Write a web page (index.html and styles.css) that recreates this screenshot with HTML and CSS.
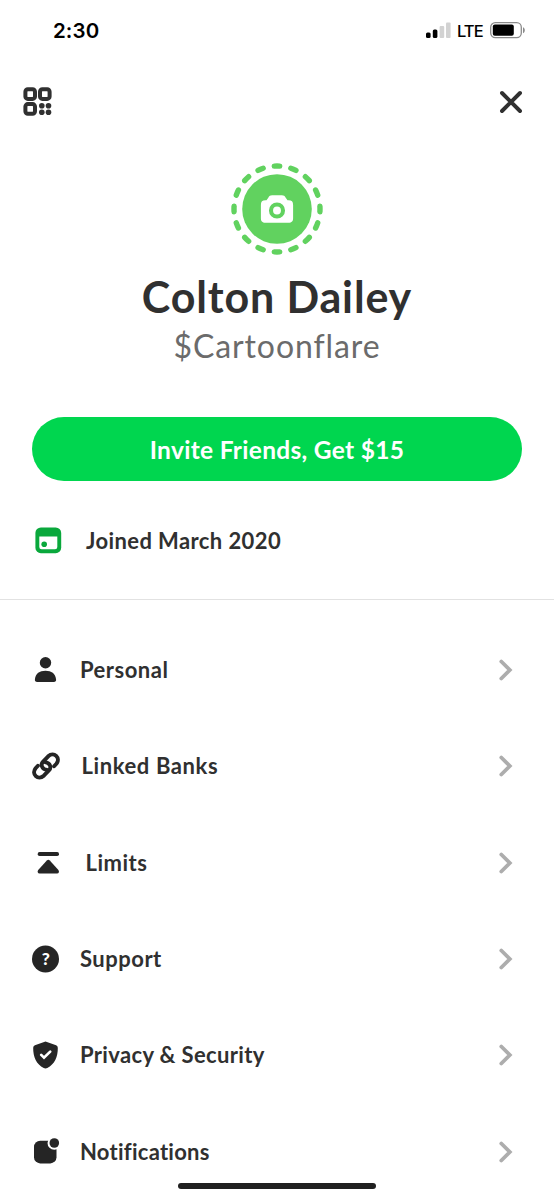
FILE: index.html
```html
<!DOCTYPE html>
<html lang="en">
<head>
<meta charset="utf-8">
<title>Profile</title>
<link rel="stylesheet" href="styles.css">
</head>
<body>
<div class="screen">
  <header class="status">
    <span class="time">2:30</span>
    <div class="status-right">
      <svg class="signal" width="26" height="17" viewBox="0 0 26 17"><rect x="0" y="10.5" width="4.6" height="5.5" rx="1.5"/><rect x="6.8" y="7.5" width="4.6" height="8.5" rx="1.5"/><g fill="#d2d2d2"><rect x="13.6" y="4" width="4.6" height="12" rx="1"/><rect x="20" y="0.5" width="4.6" height="15.5" rx="1"/></g></svg>
      <span class="lte">LTE</span>
      <svg class="battery" width="36" height="17" viewBox="0 0 36 17"><rect x=".7" y=".7" width="30.6" height="15" rx="4.6" fill="none" stroke="#8a8a8a" stroke-width="1.3"/><rect x="2.8" y="2.6" width="21" height="11.2" rx="2"/><path d="M33 5.2c2.4.7 2.4 5.3 0 6z" fill="#8a8a8a"/></svg>
    </div>
  </header>
  <nav class="topbar">
    <svg width="30" height="30" viewBox="0 0 30 30" fill="none" stroke="#303030" stroke-width="4"><rect x="2.4" y="2.3" width="9.600" height="9.600" rx="2.4"/><rect x="17" y="2.3" width="9.600" height="9.600" rx="2.4"/><rect x="2.4" y="17.1" width="9.600" height="9.600" rx="2.4"/><g fill="#303030" stroke="none"><circle cx="18.8" cy="18.7" r="2.8"/><circle cx="25.5" cy="18.7" r="2.8"/><circle cx="18.8" cy="25.3" r="2.8"/><circle cx="25.5" cy="25.3" r="2.8"/></g></svg>
    <svg width="24" height="24" viewBox="0 0 24 24" fill="none" stroke="#303030" stroke-width="3.9" stroke-linecap="round"><path d="M3 3l18 18M21 3L3 21"/></svg>
  </nav>
  <section class="profile">
    <svg class="avatar" width="92" height="92" viewBox="0 0 92 92">
      <circle cx="46" cy="46" r="34.8" fill="#61d25f"/>
      <circle cx="46" cy="46" r="43" fill="none" stroke="#61d25f" stroke-width="5.4" stroke-linecap="round" pathLength="160" stroke-dasharray="3.3 6.7" stroke-dashoffset="1.65"/>
      <path fill="#fff" d="M34.5 37.300h1l1.800-2.500c.9-1.800 2-2.500 3.800-2.500h9.800c1.800 0 2.900.7 3.800 2.500l1.800 2.500h1c3.300 0 4.600 1.400 4.600 4.600v13.200c0 3.300-1.300 4.700-4.600 4.700h-23c-3.300 0-4.600-1.400-4.600-4.700V41.900c0-3.200 1.300-4.600 4.600-4.600z"/>
      <circle cx="46" cy="47.500" r="6" fill="none" stroke="#61d25f" stroke-width="4.1"/>
    </svg>
    <h1 class="name">Colton Dailey</h1>
    <p class="handle">$Cartoonflare</p>
    <button class="invite">Invite Friends, Get $15</button>
  </section>
  <section class="joined">
    <svg width="27" height="27" viewBox="0 0 27 27"><rect x=".4" y=".4" width="25.8" height="25.8" rx="5.5" fill="#0aa83c"/><path fill="#fff" d="M4.3 9.4h18v10.5q0 2.3-2.3 2.3H6.600q-2.300 0-2.300-2.300z"/><circle cx="9.200" cy="17.200" r="2.800" fill="#0aa83c"/></svg>
    <span>Joined March 2020</span>
  </section>
  <ul class="menu">
    <li><svg class="icon" viewBox="0 0 30 30"><circle cx="13.500" cy="7.800" r="5.700"/><path d="M5.200 27C3.500 27 2.700 26 2.900 24.500 3.600 18.500 7.500 15.800 13.500 15.800s9.900 2.700 10.600 8.700c.2 1.500-.6 2.500-2.300 2.500z"/></svg><span class="label personal">Personal</span><svg class="chev" viewBox="0 0 14 22"><path d="M2.300 2.500L10.800 11l-8.500 8.500"/></svg></li>
    <li><svg class="icon" viewBox="0 0 30 30"><g fill="none" stroke="#252525" stroke-width="3.900" stroke-linecap="round" stroke-linejoin="round"><path d="M15 18.900c-4.900-.6-6.900-5.200-3.900-8.300l5.100-5.300c5.800-5.400 12.800 1.800 8.200 7.500l-2.300 2.500"/><path d="M13 11.100c4.900.6 6.900 5.200 3.900 8.300l-5.100 5.300c-5.800 5.400-12.800-1.800-8.200-7.500l2.300-2.500"/></g></svg><span class="label linked">Linked Banks</span><svg class="chev" viewBox="0 0 14 22"><path d="M2.300 2.500L10.800 11l-8.500 8.500"/></svg></li>
    <li><svg class="icon" viewBox="0 0 30 30"><rect x="5.700" y="4.100" width="21.300" height="4" rx="1.800"/><path d="M14.800 12.400q1.500-1.400 3 0l8.600 9.500c1.200 1.400.5 3.500-1.300 3.500H7.500c-1.800 0-2.500-2.100-1.300-3.500z"/></svg><span class="label limits">Limits</span><svg class="chev" viewBox="0 0 14 22"><path d="M2.300 2.500L10.800 11l-8.500 8.500"/></svg></li>
    <li><svg class="icon" viewBox="0 0 30 30"><circle cx="13.500" cy="15" r="13.500"/><text class="question" x="13.700" y="21.300" text-anchor="middle">?</text></svg><span class="label support">Support</span><svg class="chev" viewBox="0 0 14 22"><path d="M2.300 2.500L10.800 11l-8.500 8.500"/></svg></li>
    <li><svg class="icon" viewBox="0 0 30 30"><path d="M12.100 1.900q1.400-.6 2.800 0l9.200 3.400q1.700.7 1.700 2.500C26 17 22.500 24.500 15.300 28q-1.800.9-3.600 0C4.500 24.500 1 17 1.200 7.800q0-1.800 1.700-2.500z"/><path d="M9.200 14.900l2.800 2.700 6.200-6" fill="none" stroke="#fff" stroke-width="2.700" stroke-linecap="round"/></svg><span class="label privacy">Privacy &amp; Security</span><svg class="chev" viewBox="0 0 14 22"><path d="M2.300 2.500L10.800 11l-8.500 8.500"/></svg></li>
    <li><svg class="icon" viewBox="0 0 30 30"><rect x="2" y="3.700" width="22.500" height="22.700" rx="6.200"/><circle cx="22.300" cy="6" r="6.800" fill="#fff"/><circle cx="22.300" cy="6" r="4.800"/></svg><span class="label notifications">Notifications</span><svg class="chev" viewBox="0 0 14 22"><path d="M2.300 2.500L10.800 11l-8.500 8.500"/></svg></li>
  </ul>
  <div class="home"></div>
</div>
</body>
</html>
```
FILE: styles.css
```css
* { box-sizing: border-box; }
body { margin: 0; background: #fff; font-family: Lato, "Open Sans", sans-serif; color: #303030; }
.screen { position: relative; width: 554px; height: 1200px; overflow: hidden; background: #fff; }
.status { height: 60px; padding: 0 28px 0 53px; display: flex; align-items: center; justify-content: space-between; color: #000; }
.time { font: 600 20.500px Inter, sans-serif; letter-spacing: .1px; padding-top: 1px; }
.status-right { display: flex; align-items: center; }
.signal { margin-right: 5px; }
.lte { font: 500 16.500px Inter, sans-serif; letter-spacing: -.8px; margin: 2px 7px 0 0; }
.topbar { height: 84px; padding: 0 31px 0 23px; display: flex; align-items: center; justify-content: space-between; }
.profile { margin-top: 19px; padding: 0 32px; display: flex; flex-direction: column; align-items: center; }
.avatar { display: block; }
.name { margin: 17px 0 0; font-size: 43px; line-height: 50px; font-weight: 700; letter-spacing: .85px; white-space: nowrap; }
.handle { margin: 4px 0 0; font-size: 32px; line-height: 40px; color: #6b6b6b; letter-spacing: .9px; font-variant-ligatures: none; white-space: nowrap; }
.invite { margin: 51px 0 0; width: 100%; height: 64px; border: 0; border-radius: 32px; background: #00d64f; color: #fff; font: 700 24.500px Lato, sans-serif; letter-spacing: .3px; padding: 1px 0 0; }
.joined { height: 119px; border-bottom: 1px solid #e2e2e2; padding: 0 35px; display: flex; align-items: center; gap: 24px; font-size: 22px; font-weight: 700; letter-spacing: .4px; }
.menu { list-style: none; margin: 0; padding: 21.500px 41px 0 32px; }
.menu li { height: 96.450px; display: flex; align-items: center; }
.icon { width: 30px; height: 30px; fill: #252525; flex: none; }
.label { flex: 1; margin-left: 18px; font-size: 22px; line-height: 26px; font-weight: 700; letter-spacing: .5px; white-space: nowrap; }
.linked { margin-left: 19.500px; letter-spacing: .6px; }
.limits { margin-left: 23.500px; }
.privacy { letter-spacing: .35px; }
.notifications { letter-spacing: .25px; }
.question { font: 900 17.500px Lato, sans-serif; fill: #fff; }
.chev { width: 14px; height: 22px; fill: none; stroke: #adadad; stroke-width: 3.800; stroke-linecap: round; }
.home { position: absolute; left: 178px; top: 1183px; width: 198px; height: 6px; border-radius: 3px; background: #202020; }
```
